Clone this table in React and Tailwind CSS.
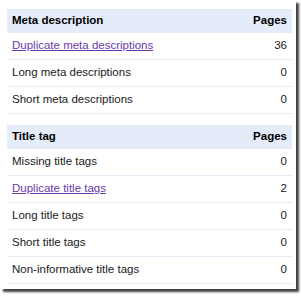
import React from 'react';

const metaRows = [
  { label: 'Duplicate meta descriptions', pages: 36, link: true },
  { label: 'Long meta descriptions', pages: 0 },
  { label: 'Short meta descriptions', pages: 0 },
];

const titleRows = [
  { label: 'Missing title tags', pages: 0 },
  { label: 'Duplicate title tags', pages: 2, link: true },
  { label: 'Long title tags', pages: 0 },
  { label: 'Short title tags', pages: 0 },
  { label: 'Non-informative title tags', pages: 0 },
];

function Section({ title, rows }) {
  return (
    <div>
      <div className="flex items-center justify-between h-[24px] bg-[#e5ecf9] px-[5px] font-bold text-black">
        <span>{title}</span>
        <span>Pages</span>
      </div>
      {rows.map((row) => (
        <div
          key={row.label}
          className="flex items-center justify-between h-[27px] px-[5px] border-b border-[#e5ecf9] text-[#1a1a1a]"
        >
          {row.link ? (
            <a href="#" className="text-[#6a3aa8] underline">
              {row.label}
            </a>
          ) : (
            <span>{row.label}</span>
          )}
          <span>{row.pages}</span>
        </div>
      ))}
    </div>
  );
}

export default function App() {
  return (
    <div className="w-[301px] h-[296px] bg-white">
      <div className="w-[296px] h-[289px] bg-white shadow-[3px_3px_2px_rgba(0,0,0,0.75)] pt-[9px] pl-[7px] pr-[4px]">
        <div className="text-[11.5px] leading-none" style={{ fontFamily: '"Liberation Sans", Arial, sans-serif' }}>
          <Section title="Meta description" rows={metaRows} />
          <div className="h-[11px]" />
          <Section title="Title tag" rows={titleRows} />
        </div>
      </div>
    </div>
  );
}
